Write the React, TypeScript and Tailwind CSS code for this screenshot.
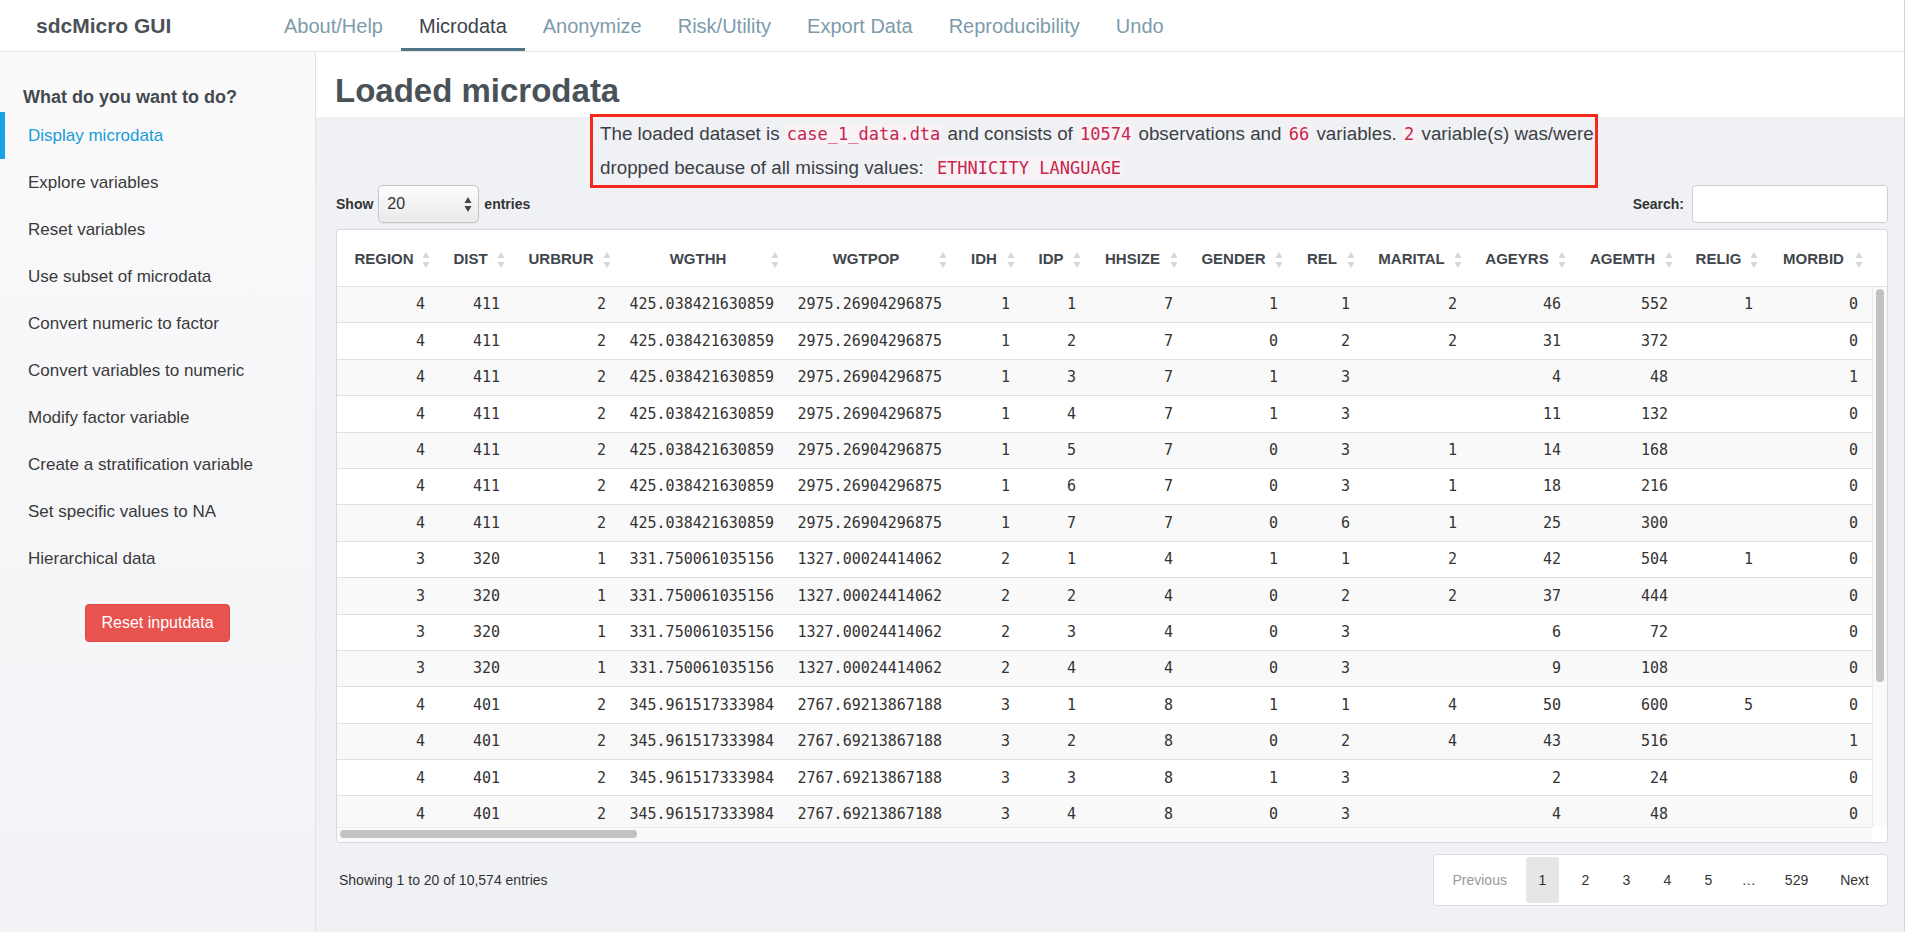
import React from 'react';

const navTabs = ['About/Help', 'Microdata', 'Anonymize', 'Risk/Utility', 'Export Data', 'Reproducibility', 'Undo'];

const sideItems = [
    'Display microdata',
    'Explore variables',
    'Reset variables',
    'Use subset of microdata',
    'Convert numeric to factor',
    'Convert variables to numeric',
    'Modify factor variable',
    'Create a stratification variable',
    'Set specific values to NA',
    'Hierarchical data',
];

const columns = [
    { name: 'REGION', w: 'w-[98px]' },
    { name: 'DIST', w: 'w-[75px]' },
    { name: 'URBRUR', w: 'w-[106px]' },
    { name: 'WGTHH', w: 'w-[168px]' },
    { name: 'WGTPOP', w: 'w-[168px]' },
    { name: 'IDH', w: 'w-[68px]' },
    { name: 'IDP', w: 'w-[66px]' },
    { name: 'HHSIZE', w: 'w-[97px]' },
    { name: 'GENDER', w: 'w-[105px]' },
    { name: 'REL', w: 'w-[72px]' },
    { name: 'MARITAL', w: 'w-[107px]' },
    { name: 'AGEYRS', w: 'w-[104px]' },
    { name: 'AGEMTH', w: 'w-[107px]' },
    { name: 'RELIG', w: 'w-[85px]' },
    { name: 'MORBID', w: 'w-[105px]' },
];

const hh1 = ['4', '411', '2', '425.038421630859', '2975.26904296875'];
const hh2 = ['3', '320', '1', '331.750061035156', '1327.00024414062'];
const hh3 = ['4', '401', '2', '345.961517333984', '2767.69213867188'];

const rows: string[][] = [
    [...hh1, '1', '1', '7', '1', '1', '2', '46', '552', '1', '0'],
    [...hh1, '1', '2', '7', '0', '2', '2', '31', '372', '', '0'],
    [...hh1, '1', '3', '7', '1', '3', '', '4', '48', '', '1'],
    [...hh1, '1', '4', '7', '1', '3', '', '11', '132', '', '0'],
    [...hh1, '1', '5', '7', '0', '3', '1', '14', '168', '', '0'],
    [...hh1, '1', '6', '7', '0', '3', '1', '18', '216', '', '0'],
    [...hh1, '1', '7', '7', '0', '6', '1', '25', '300', '', '0'],
    [...hh2, '2', '1', '4', '1', '1', '2', '42', '504', '1', '0'],
    [...hh2, '2', '2', '4', '0', '2', '2', '37', '444', '', '0'],
    [...hh2, '2', '3', '4', '0', '3', '', '6', '72', '', '0'],
    [...hh2, '2', '4', '4', '0', '3', '', '9', '108', '', '0'],
    [...hh3, '3', '1', '8', '1', '1', '4', '50', '600', '5', '0'],
    [...hh3, '3', '2', '8', '0', '2', '4', '43', '516', '', '1'],
    [...hh3, '3', '3', '8', '1', '3', '', '2', '24', '', '0'],
    [...hh3, '3', '4', '8', '0', '3', '', '4', '48', '', '0'],
];

const SortIcon = () => (
    <svg width="8" height="18" viewBox="0 0 8 18" className="ml-[7px] shrink-0">
        <path d="M4 1 L7.5 7 L0.5 7 Z" fill="#d7d7d7" />
        <path d="M0.5 11 L7.5 11 L4 17 Z" fill="#d7d7d7" />
    </svg>
);

const Code = ({ children, className = '' }: { children: React.ReactNode; className?: string }) => (
    <code className={`rounded-[4px] bg-[#f9f2f4] px-[2px] font-['DejaVu_Sans_Mono',monospace] text-[17px] text-[#c7254e] ${className}`}>
        {children}
    </code>
);

export default function App() {
    return (
        <div className="h-[932px] w-full overflow-hidden bg-white font-['Liberation_Sans',Arial,sans-serif]">
            <div className="flex h-full w-[1905px] flex-col border-r border-[#d6d6d6]">
                <nav className="flex h-[52px] shrink-0 border-b border-[#e4e5e7] bg-white">
                    <div className="flex w-[266px] items-center pl-[36px] text-[21px] font-bold text-[#4b5157]">sdcMicro GUI</div>
                    <ul className="flex h-full">
                        {navTabs.map((t) =>
                            t === 'Microdata' ? (
                                <li key={t} className="flex items-center border-b-[3px] border-[#4f7586] px-[18px] pt-[3px] text-[20px] text-[#3d4349]">
                                    {t}
                                </li>
                            ) : (
                                <li key={t} className="flex items-center px-[18px] text-[20px] text-[#7d9bab]">
                                    {t}
                                </li>
                            )
                        )}
                    </ul>
                </nav>

                <div className="flex min-h-0 flex-1">
                    <aside className="w-[316px] shrink-0 border-r border-[#e3e4e7] bg-gradient-to-b from-[#fafafb] to-[#f2f3f6]">
                        <h4 className="pl-[23px] pt-[33px] text-[18px] font-bold leading-[24px] text-[#43494f]">What do you want to do?</h4>
                        <ul className="mt-[3px]">
                            {sideItems.map((item, i) =>
                                i === 0 ? (
                                    <li key={item} className="flex h-[47px] items-center border-l-[5px] border-[#19a3e6] pl-[23px] text-[17px] text-[#1a9dd9]">
                                        {item}
                                    </li>
                                ) : (
                                    <li key={item} className="flex h-[47px] items-center pl-[28px] text-[17px] text-[#3a3a3a]">
                                        {item}
                                    </li>
                                )
                            )}
                        </ul>
                        <div className="mt-[22px] flex justify-center">
                            <button className="h-[38px] rounded-[4px] border border-[#dc4541] bg-[#e8534f] px-[15px] text-[16px] text-white">
                                Reset inputdata
                            </button>
                        </div>
                    </aside>

                    <main className="flex min-w-0 flex-1 flex-col bg-[#f0f1f5]">
                        <div className="h-[65px] shrink-0 bg-white pl-[19px] pt-[20px]">
                            <h2 className="text-[33px] font-bold leading-[38px] text-[#4a5258]">Loaded microdata</h2>
                        </div>

                        <div className="pl-[20px] pr-[16px]">
                            <div className="relative ml-[257px] w-[1002px] whitespace-nowrap pl-[7px] text-[18.8px] leading-[33px] text-[#3b4045]">
                                <div className="pointer-events-none absolute -inset-[3px] border-[3px] border-[#f5281c]" />
                                The loaded dataset is <Code>case_1_data.dta</Code> and consists of <Code>10574</Code> observations and <Code>66</Code> variables. <Code>2</Code> variable(s) was/were
                                <br />
                                dropped because of all missing values: <Code className="ml-[6px]">ETHNICITY LANGUAGE</Code>
                            </div>

                            <div className="flex h-[38px] items-center justify-between">
                                <div className="flex items-center gap-[5px] text-[14px] font-bold text-[#333]">
                                    <span>Show</span>
                                    <div className="flex h-[38px] w-[101px] items-center justify-between rounded-[5px] border border-[#c6c6c6] bg-gradient-to-b from-[#fdfdfd] to-[#e9e9e9] pl-[8px] pr-[6px] text-[16px] font-normal text-[#333] shadow-[0_1px_1px_rgba(0,0,0,0.06)]">
                                        <span>20</span>
                                        <svg width="8" height="15" viewBox="0 0 8 15">
                                            <path d="M4 0 L7.5 6 L0.5 6 Z" fill="#444" />
                                            <path d="M0.5 9 L7.5 9 L4 15 Z" fill="#444" />
                                        </svg>
                                    </div>
                                    <span>entries</span>
                                </div>
                                <div className="flex items-center gap-[8px] text-[14px] font-bold text-[#333]">
                                    <span>Search:</span>
                                    <input className="h-[38px] w-[196px] rounded-[4px] border border-[#cfcfcf] bg-white px-2 outline-none" />
                                </div>
                            </div>

                            <div className="mt-[6px] overflow-hidden rounded-[3px] border border-[#d9d9d9] bg-white">
                                <div className="flex h-[57px] border-b border-[#e0e0e0] pt-[3px]">
                                    {columns.map((c) => (
                                        <div key={c.name} className={`${c.w} flex shrink-0 items-center pl-[16px] pr-[5px]`}>
                                            <span className="flex-1 whitespace-nowrap text-center text-[15px] font-bold text-[#3f464c]">{c.name}</span>
                                            <SortIcon />
                                        </div>
                                    ))}
                                </div>

                                <div className="flex h-[540px] overflow-hidden">
                                    <div className="min-w-0 flex-1">
                                        {rows.map((r, i) => (
                                            <div
                                                key={i}
                                                className={`flex h-[36.4px] shrink-0 items-center border-b border-[#e0e0e0] font-['DejaVu_Sans_Mono',monospace] text-[15px] text-[#333] ${i % 2 === 0 ? 'bg-[#f9f9f9]' : 'bg-white'}`}
                                            >
                                                {r.map((v, j) => (
                                                    <div key={j} className={`${columns[j].w} shrink-0 pr-[10px] text-right`}>
                                                        {v}
                                                    </div>
                                                ))}
                                            </div>
                                        ))}
                                    </div>
                                    <div className="w-[15px] shrink-0 border-l border-[#ececec] bg-[#fafafa] pl-[3px] pt-[2px]">
                                        <div className="h-[393px] w-[8px] rounded-full bg-[#c2c2c2]" />
                                    </div>
                                </div>

                                <div className="flex h-[15px]">
                                    <div className="flex-1 border-t border-[#ececec] bg-[#fafafa] pl-[3px] pt-[2px]">
                                        <div className="h-[8px] w-[297px] rounded-full bg-[#c2c2c2]" />
                                    </div>
                                    <div className="w-[15px] bg-white" />
                                </div>
                            </div>

                            <div className="mt-[11px] flex items-center justify-between">
                                <div className="pl-[3px] text-[14px] text-[#333]">Showing 1 to 20 of 10,574 entries</div>
                                <div className="flex h-[52px] rounded-[4px] border border-[#dcdcdc] bg-white p-[2px] text-[14px] text-[#333]">
                                    <span className="flex items-center px-[16px] text-[#9a9a9a]">Previous</span>
                                    <span className="ml-[3px] mr-[6px] flex items-center rounded-[3px] bg-[#e6e6e6] px-[12.6px]">1</span>
                                    {['2', '3', '4', '5'].map((p) => (
                                        <span key={p} className="flex items-center px-[16.6px]">
                                            {p}
                                        </span>
                                    ))}
                                    <span className="flex items-center px-[13px]">…</span>
                                    <span className="flex items-center px-[16px]">529</span>
                                    <span className="flex items-center px-[16px]">Next</span>
                                </div>
                            </div>
                        </div>
                    </main>
                </div>
            </div>
        </div>
    );
}
